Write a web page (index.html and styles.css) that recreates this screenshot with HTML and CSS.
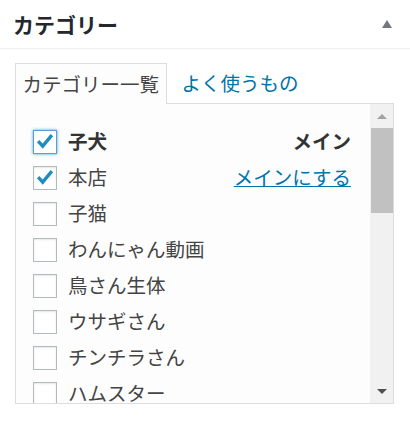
FILE: index.html
```html
<!DOCTYPE html>
<html lang="ja">
<head>
<meta charset="utf-8">
<title>カテゴリー</title>
<link rel="stylesheet" href="styles.css">
</head>
<body>
<div class="postbox">
  <div class="hndle">
    <h2 class="title">カテゴリー</h2>
    <span class="toggle"></span>
  </div>
  <div class="inside">
    <div class="tabs">
      <div class="tab active">カテゴリー一覧</div>
      <div class="tab-rest"><a class="tab-link" href="#">よく使うもの</a></div>
    </div>
    <div class="panel">
      <ul class="list">
        <li class="item primary">
          <span class="cb focus"><svg viewBox="0 0 24 24" width="22" height="22"><polyline points="4.5,11 9.5,16.5 19.5,4.5" /></svg></span>
          <span class="label">子犬</span>
          <span class="side main">メイン</span>
        </li>
        <li class="item">
          <span class="cb"><svg viewBox="0 0 24 24" width="22" height="22"><polyline points="4.5,11 9.5,16.5 19.5,4.5" /></svg></span>
          <span class="label">本店</span>
          <a class="side make" href="#">メインにする</a>
        </li>
        <li class="item"><span class="cb"></span><span class="label">子猫</span></li>
        <li class="item"><span class="cb"></span><span class="label">わんにゃん動画</span></li>
        <li class="item"><span class="cb"></span><span class="label">鳥さん生体</span></li>
        <li class="item"><span class="cb"></span><span class="label">ウサギさん</span></li>
        <li class="item"><span class="cb"></span><span class="label">チンチラさん</span></li>
        <li class="item"><span class="cb"></span><span class="label">ハムスター</span></li>
      </ul>
      <div class="scrollbar">
        <div class="sb-btn"><span class="arrow-up"></span></div>
        <div class="sb-thumb"></div>
        <div class="sb-space"></div>
        <div class="sb-btn down"><span class="arrow-down"></span></div>
      </div>
    </div>
  </div>
</div>
</body>
</html>
```
FILE: styles.css
```css
html, body {
  margin: 0;
  padding: 0;
  background: #ffffff;
}
body {
  font-family: "Noto Sans CJK JP", "Noto Sans", sans-serif;
  color: #444444;
  width: 410px;
  height: 421px;
  overflow: hidden;
}
.postbox {
  background: #ffffff;
}
.hndle {
  display: flex;
  align-items: center;
  height: 48px;
  padding: 0 18px 0 13px;
  border-bottom: 1px solid #eeeeee;
}
.title {
  margin: 0;
  flex: 1;
  font-size: 21px;
  font-weight: bold;
  color: #23282d;
  line-height: 46px;
}
.toggle {
  width: 0;
  height: 0;
  border-left: 5.5px solid transparent;
  border-right: 5.5px solid transparent;
  border-bottom: 8px solid #72777c;
}
.inside {
  padding: 14px 0 0 15px;
}
.tabs {
  display: flex;
  width: 379px;
  height: 41px;
  font-size: 19.5px;
}
.tab.active {
  box-sizing: border-box;
  height: 41px;
  padding: 0 6.5px;
  line-height: 39px;
  border: 1px solid #dddddd;
  border-bottom: none;
  background: #fdfdfd;
  color: #444444;
}
.tab-rest {
  flex: 1;
  border-bottom: 1px solid #dddddd;
  padding-left: 15px;
  line-height: 39px;
}
.tab-link {
  color: #0073aa;
  text-decoration: none;
}
.panel {
  display: flex;
  box-sizing: border-box;
  width: 379px;
  height: 300px;
  border: 1px solid #dddddd;
  border-top: none;
  background: #fdfdfd;
}
.list {
  flex: 1;
  margin: 0;
  padding: 20px 19px 0 17px;
  list-style: none;
  overflow: hidden;
  font-size: 19.5px;
}
.item {
  display: flex;
  align-items: center;
  height: 36px;
  color: #444444;
}
.label,
.side {
  padding-bottom: 3px;
}
.cb {
  box-sizing: border-box;
  width: 24px;
  height: 24px;
  flex: none;
  border: 1px solid #b4b9be;
  background: #ffffff;
  box-shadow: inset 0 1px 2px rgba(0, 0, 0, 0.1);
  margin-right: 11px;
  display: flex;
  align-items: center;
  justify-content: center;
}
.cb svg polyline {
  fill: none;
  stroke: #1e8cbe;
  stroke-width: 3.6;
  stroke-linejoin: miter;
}
.cb.focus {
  border-color: #5b9dd9;
  box-shadow: 0 0 3px rgba(30, 140, 190, 0.8);
}
.primary .label {
  font-weight: bold;
  color: #333333;
}
.side {
  margin-left: auto;
}
.side.main {
  font-weight: bold;
  color: #333333;
}
.side.make {
  color: #0073aa;
  text-decoration: underline;
}
.scrollbar {
  width: 23px;
  flex: none;
  background: #f1f1f1;
  display: flex;
  flex-direction: column;
}
.sb-btn {
  height: 24px;
  display: flex;
  align-items: center;
  justify-content: center;
}
.sb-thumb {
  height: 85px;
  margin-left: 1px;
  background: #c1c1c1;
}
.sb-space {
  flex: 1;
}
.arrow-up {
  width: 0;
  height: 0;
  border-left: 5px solid transparent;
  border-right: 5px solid transparent;
  border-bottom: 5px solid #a3a3a3;
}
.arrow-down {
  width: 0;
  height: 0;
  border-left: 5.5px solid transparent;
  border-right: 5.5px solid transparent;
  border-top: 5.5px solid #505050;
}
```
